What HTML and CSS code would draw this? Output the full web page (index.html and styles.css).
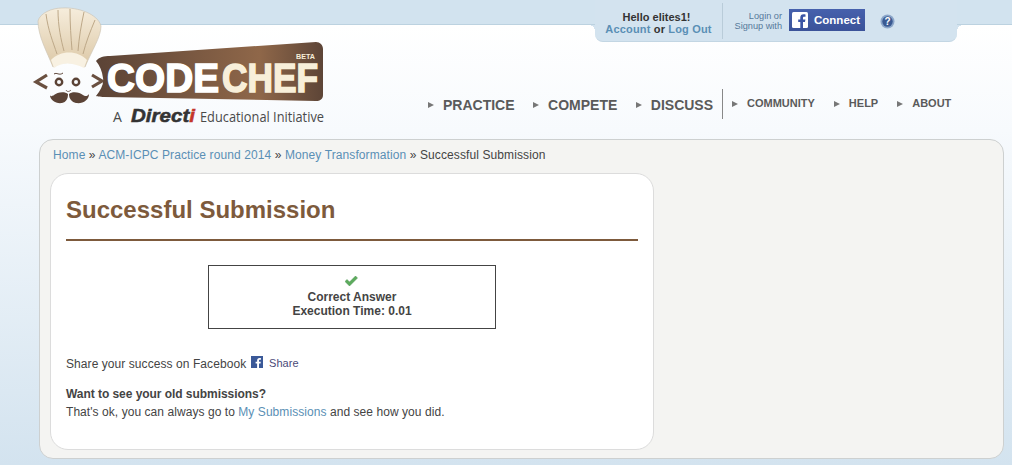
FILE: index.html
```html
<!DOCTYPE html>
<html lang="en">
<head>
  <meta charset="UTF-8" />
  <title>Successful Submission | CodeChef</title>
  <link rel="stylesheet" href="styles.css">
</head>
<body>
  <div class="header">
    <a class="logo" href="#">
      <svg width="310" height="125" viewBox="25 2 310 125">
        <defs>
          <linearGradient id="banner" x1="0" y1="0" x2="1" y2="0">
            <stop offset="0" stop-color="#5b4336"/>
            <stop offset="0.72" stop-color="#8f6749"/>
            <stop offset="1" stop-color="#5d4537"/>
          </linearGradient>
          <linearGradient id="hat" x1="0" y1="0" x2="0" y2="1">
            <stop offset="0" stop-color="#f6eddc"/>
            <stop offset="1" stop-color="#dcc8a6"/>
          </linearGradient>
        </defs>
        <!-- hat -->
        <path d="M38 21C40 13 52 8 62 8C78 7 98 14 101 26C101 37 92 50 85 67C72 61 62 61 53 67C47 52 38 36 38 21Z" fill="url(#hat)" stroke="#cfc6b6" stroke-width="0.7"/>
        <path d="M51 60C60 50 78 50 87 60L84 68C72 62 62 62 54 68Z" fill="#f8f1e2"/>
        <path d="M46 14C48 30 53 42 57 54M58 10C58 26 61 40 64 51M70 9C70 24 71 38 72 50M84 12C81 26 79 38 78 51M95 20C90 32 86 42 83 54" fill="none" stroke="#bda888" stroke-width="1"/>
        <!-- face -->
        <path d="M47 75L36 82L47 88" fill="none" stroke="#6a5040" stroke-width="3.200"/>
        <path d="M92 75L102 81L92 87" fill="none" stroke="#6a5040" stroke-width="3.200"/>
        <circle cx="59" cy="82" r="3.200" fill="none" stroke="#5b4336" stroke-width="2.400"/>
        <circle cx="76" cy="82" r="3.200" fill="none" stroke="#5b4336" stroke-width="2.400"/>
        <path d="M54 74C57 72 59 76 63 73" fill="none" stroke="#5b4336" stroke-width="1"/>
        <path d="M66 90C67 92 69 92 71 90" fill="none" stroke="#5b4336" stroke-width="0.800"/>
        <path d="M68 94C65 91 57 92 54 95C52 97 50 96 50 95C50 100 56 104 62 103C66 102 68 99 68 94Z" fill="#5b4336"/>
        <path d="M69 94C72 91 80 92 83 95C85 97 88 96 89 94C89 100 83 104 76 103C72 102 69 99 69 94Z" fill="#5b4336"/>
        <!-- banner -->
        <path d="M96 61C99 57 104 56 110 56L316 42C320 42 323 45 323 49L323 95C323 99 320 101 316 101L104 97C100 97 96 96 96 96C101 90 104 84 103 78C102 71 100 66 96 61Z" fill="url(#banner)"/>
        <text class="logo-word" x="107" y="92" textLength="112" lengthAdjust="spacingAndGlyphs" fill="#fff" stroke="#fff">CODE</text>
        <text class="logo-word" x="222" y="92" textLength="96" lengthAdjust="spacingAndGlyphs" fill="#f8efd9" stroke="#f8efd9">CHEF</text>
        <text class="logo-beta" x="296" y="59" textLength="19" lengthAdjust="spacingAndGlyphs" fill="#f8efd9">BETA</text>
        <text class="logo-tag" x="113" y="122">A</text>
        <text class="logo-directi" x="131" y="122" textLength="64" lengthAdjust="spacingAndGlyphs" fill="#333">Direct<tspan fill="#c4362a" stroke="#c4362a">i</tspan></text>
        <text class="logo-tag" x="200" y="122" textLength="124" lengthAdjust="spacingAndGlyphs">Educational Initiative</text>
      </svg>
    </a>

    <div class="header-right">
      <div class="user-tab">
        <div class="user-info">
          <div class="hello">Hello elites1!</div>
          <div class="account"><a href="#">Account</a> or <a href="#">Log Out</a></div>
        </div>
        <div class="login-note">Login or<br>Signup with</div>
        <a class="fb-connect" href="#">
          <svg class="fb-icon" width="16" height="16" viewBox="0 0 16 16">
            <rect width="16" height="16" rx="1.500" fill="#fff"/>
            <path d="M11 16V10h2l.4-2.500H11V6c0-.8.3-1.200 1.200-1.200h1.300V2.400C13 2.300 12.300 2.200 11.500 2.200 9.500 2.200 8.300 3.400 8.300 5.600v1.900H6.200V10h2.100v6Z" fill="#3b55a5"/>
          </svg>
          Connect
        </a>
        <svg class="help-icon" width="15" height="15" viewBox="0 0 15 15">
          <circle cx="7.500" cy="7.500" r="7" fill="#8ba6c9"/>
          <circle cx="7.500" cy="7.500" r="5.200" fill="#3a5a92"/>
          <text class="help-mark" x="7.500" y="11" text-anchor="middle">?</text>
        </svg>
      </div>

      <ul class="nav">
        <li class="main-item"><a href="#">PRACTICE</a></li>
        <li class="main-item"><a href="#">COMPETE</a></li>
        <li class="main-item last-main"><a href="#">DISCUSS</a></li>
        <li class="sub-item"><a href="#">COMMUNITY</a></li>
        <li class="sub-item"><a href="#">HELP</a></li>
        <li class="sub-item"><a href="#">ABOUT</a></li>
      </ul>
    </div>
  </div>

  <div class="panel">
    <div class="breadcrumb">
      <a href="#">Home</a> » <a href="#">ACM-ICPC Practice round 2014</a> » <a href="#">Money Transformation</a> » Successful Submission
    </div>
    <div class="card">
      <h1>Successful Submission</h1>
      <div class="result-box">
        <svg class="check" width="14" height="12" viewBox="1 0 14 12">
          <path d="M1 6.500L3 4.500L5.500 7L11.500 1L13.500 3L5.500 11Z" fill="#5cab5c" stroke="#4a9150" stroke-width="0.500"/>
        </svg>
        <div>Correct Answer</div>
        <div>Execution Time: 0.01</div>
      </div>
      <div class="share">
        Share your success on Facebook
        <svg class="fb-small" width="12" height="12" viewBox="0 0 12 12">
          <rect width="12" height="12" fill="#3b5998"/>
          <path d="M8 12V7.500h1.500L9.800 5.700H8V4.600c0-.6.200-.9.900-.9h1V2.100C9.500 2 9 2 8.500 2 7 2 6.100 2.900 6.100 4.400v1.300H4.600v1.800h1.500V12Z" fill="#fff"/>
        </svg>
        <a class="share-link" href="#">Share</a>
      </div>
      <p class="old-title">Want to see your old submissions?</p>
      <p class="old-text">That's ok, you can always go to <a href="#">My Submissions</a> and see how you did.</p>
    </div>
  </div>
</body>
</html>
```

FILE: styles.css
```css
html {
  height: 100%;
}

body {
  margin: 0;
  height: 465px;
  overflow: hidden;
  font-family: "Liberation Sans", Arial, sans-serif;
  font-size: 12px;
  color: #444;
  background: linear-gradient(#fff 25px, #f7fafd 130px, #d3e3ef 465px);
}

a {
  text-decoration: none;
  color: #5a8fb5;
}

.header {
  height: 139px;
  display: flex;
  background: linear-gradient(#d2e3ef 24px, #bcd2e0 24px, #bcd2e0 25px, transparent 25px);
}

.logo {
  display: block;
  width: 310px;
  height: 125px;
  margin: 2px 0 0 25px;
}

.logo svg {
  display: block;
}

.logo-word {
  font-family: "Liberation Sans", sans-serif;
  font-weight: bold;
  font-size: 41px;
  stroke-width: 1.600;
}

.logo-beta {
  font-family: "Liberation Sans", sans-serif;
  font-weight: bold;
  font-size: 8px;
}

.logo-tag {
  font-family: "Open Sans", sans-serif;
  font-size: 14px;
  fill: #4a4a4a;
}

.logo-directi {
  font-family: "Liberation Sans", sans-serif;
  font-weight: bold;
  font-style: italic;
  font-size: 18px;
  stroke: #333;
  stroke-width: 0.500;
}

.header-right {
  flex: 1;
  margin-left: 260px;
}

.user-tab {
  position: relative;
  width: 362px;
  height: 41px;
  display: flex;
  background: #d3e3ef;
  border-bottom: 1px solid #c3d6e3;
  border-radius: 0 0 8px 8px;
}

.user-tab::before,
.user-tab::after {
  content: "";
  position: absolute;
  top: 25px;
  width: 6px;
  height: 6px;
}

.user-tab::before {
  left: -6px;
  background: radial-gradient(circle at 0 100%, transparent 6px, #d3e3ef 6px);
}

.user-tab::after {
  right: -6px;
  background: radial-gradient(circle at 100% 100%, transparent 6px, #d3e3ef 6px);
}

.user-info {
  width: 128px;
  height: 36px;
  padding: 8px 4px 0 0;
  box-sizing: border-box;
  margin-top: 3px;
  border-right: 1px solid #b9ccd9;
  text-align: center;
  font-weight: bold;
  font-size: 11px;
  color: #333;
  line-height: 12px;
}

.account {
  padding-left: 4px;
  letter-spacing: 0.170px;
}

.login-note {
  width: 59px;
  margin-top: 11px;
  text-align: right;
  font-size: 9.200px;
  line-height: 10px;
  color: #56799a;
}

.fb-connect {
  display: flex;
  align-items: center;
  gap: 6px;
  width: 76px;
  height: 22px;
  margin: 9px 0 0 7px;
  padding-left: 3px;
  box-sizing: border-box;
  background: linear-gradient(#4661ad, #3a5299);
  color: #fff;
  font-weight: bold;
  font-size: 11.500px;
}

.fb-icon {
  flex: none;
}

.help-icon {
  margin: 14px 0 0 15px;
}

.help-mark {
  font-family: "Liberation Sans", sans-serif;
  font-weight: bold;
  font-size: 10px;
  fill: #fff;
}

.nav {
  display: flex;
  list-style: none;
  margin: 47px 0 0 -167px;
  padding: 0;
  height: 30px;
  font-weight: bold;
}

.nav a {
  color: #5a5a5a;
}

.nav li {
  position: relative;
  padding-left: 15px;
}

.nav li::before {
  content: "";
  position: absolute;
  left: 0;
  border-left: 6px solid #777;
  border-top: 3.500px solid transparent;
  border-bottom: 3.500px solid transparent;
}

.main-item {
  font-size: 14px;
  line-height: 33px;
  margin-right: 18.500px;
}

.main-item::before {
  top: 13px;
}

.main-item.last-main {
  margin-right: 9px;
  padding-right: 9px;
  border-right: 1px solid #888;
}

.sub-item {
  font-size: 11px;
  line-height: 29px;
  margin-right: 19px;
}

.sub-item::before {
  top: 12px;
}

.panel {
  width: 965px;
  height: 320px;
  margin-left: 39px;
  padding: 8px 10px 0 10px;
  box-sizing: border-box;
  background: #f4f4f2;
  border: 1px solid #cdd0d0;
  border-radius: 14px;
}

.breadcrumb {
  height: 25px;
  padding-left: 3px;
  line-height: 14px;
  color: #444;
  letter-spacing: 0.100px;
}

.card {
  width: 604px;
  height: 277px;
  padding: 0 15px;
  box-sizing: border-box;
  background: #fff;
  border: 1px solid #dcdcdc;
  border-radius: 18px;
}

h1 {
  margin: 0 0 24px;
  padding: 21px 0 15px;
  height: 29px;
  line-height: 29px;
  font-size: 24px;
  color: #7d5a3c;
  border-bottom: 2px solid #7d5a3c;
}

.result-box {
  width: 288px;
  height: 64px;
  margin-left: 142px;
  padding-top: 9px;
  box-sizing: border-box;
  border: 1px solid #444;
  text-align: center;
  font-weight: bold;
  line-height: 14px;
}

.check {
  display: block;
  margin: 0 auto 3px;
}

.share {
  margin-top: 27px;
  line-height: 14px;
  letter-spacing: 0.070px;
}

.fb-small {
  margin: 0 3px 0 1px;
}

.share-link {
  font-size: 11px;
  color: #4a4a78;
  position: relative;
  top: -1px;
}

.old-title {
  margin: 16px 0 0;
  font-weight: bold;
  line-height: 14px;
  letter-spacing: -0.050px;
}

.old-text {
  margin: 4px 0 0;
  line-height: 14px;
  letter-spacing: 0.060px;
}
```
